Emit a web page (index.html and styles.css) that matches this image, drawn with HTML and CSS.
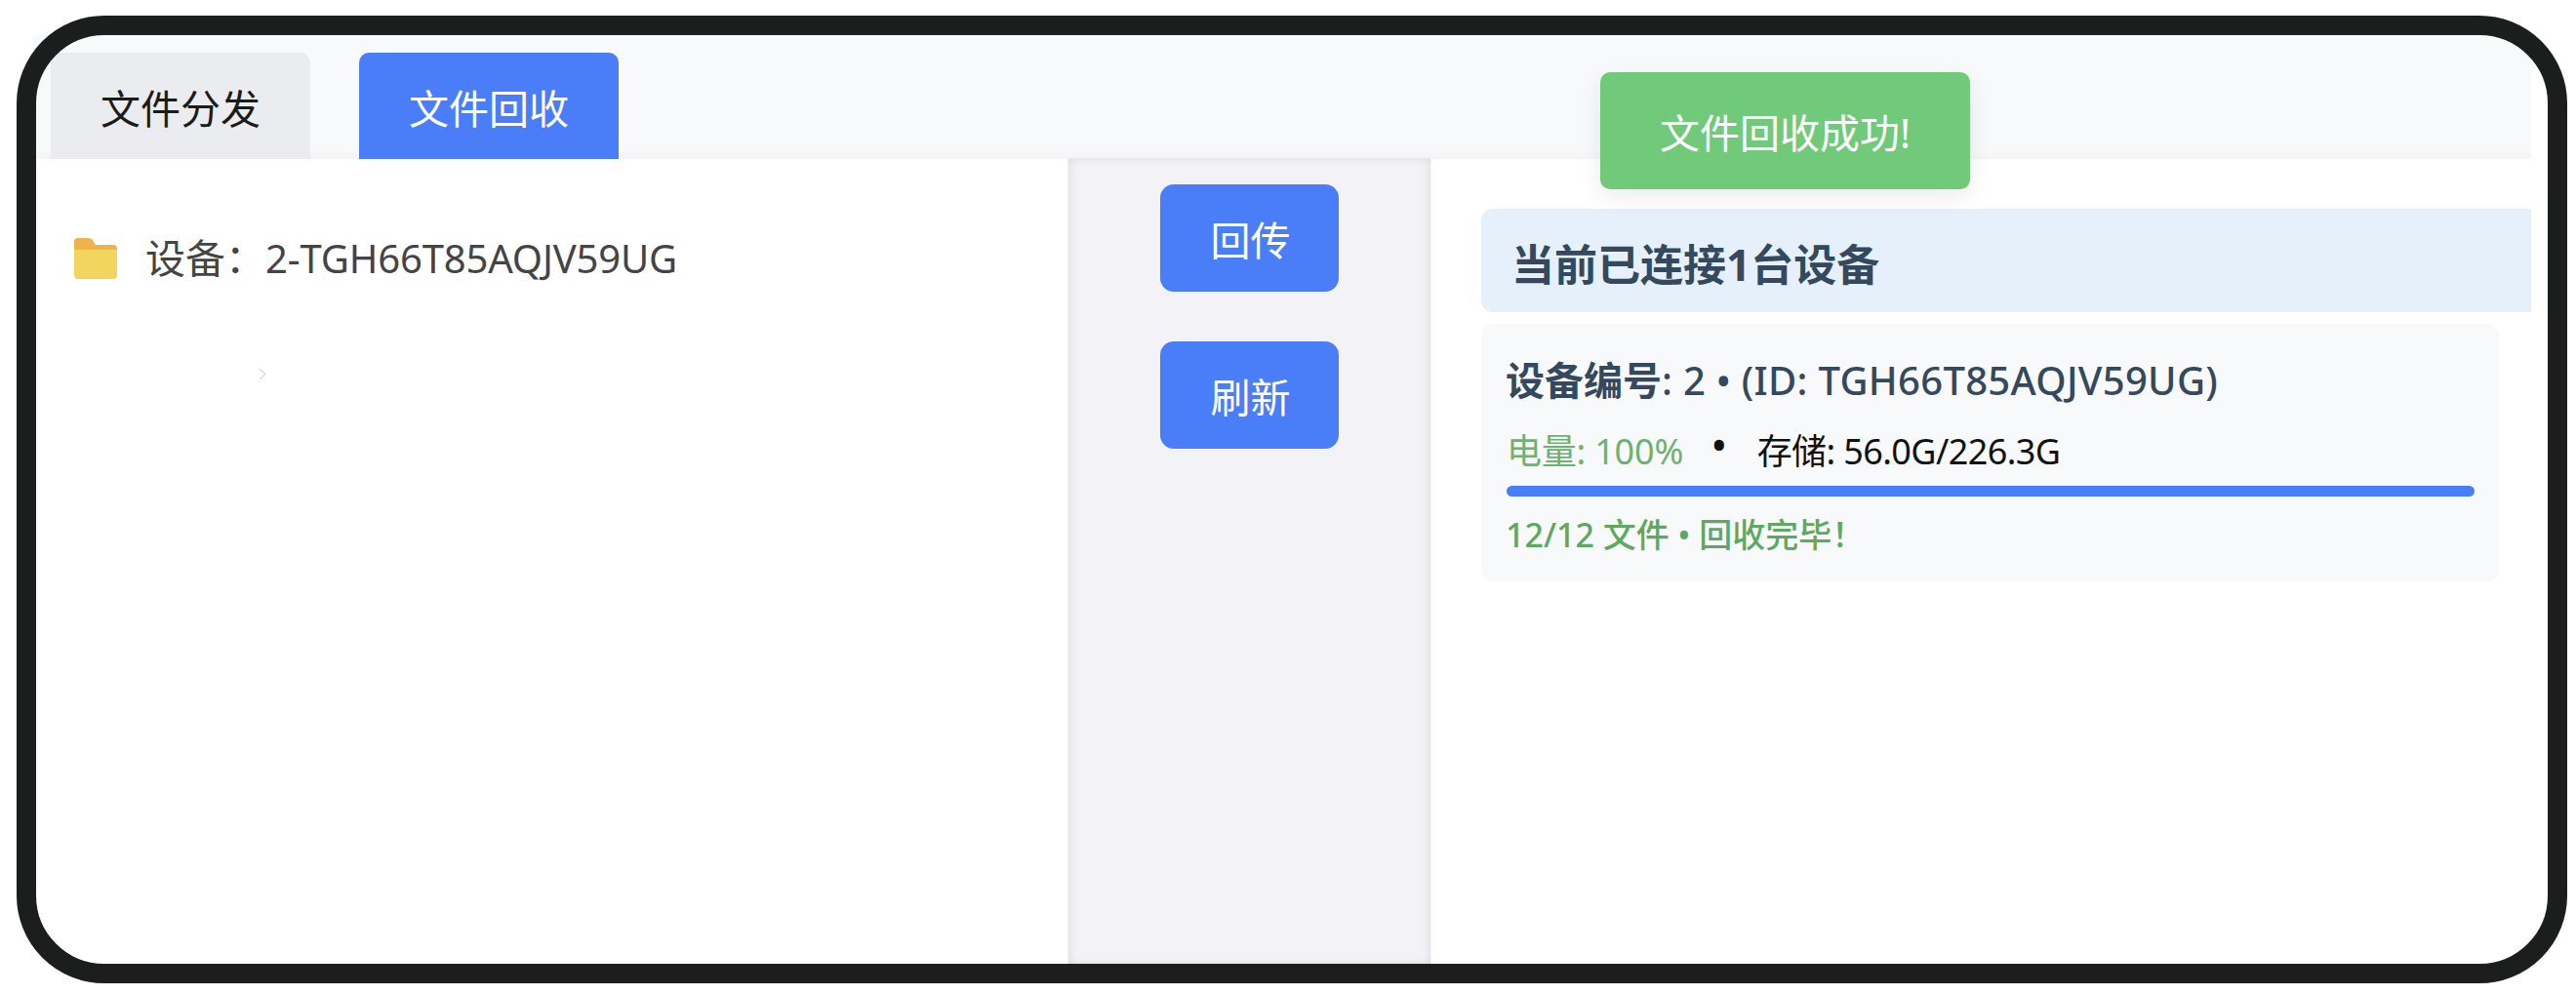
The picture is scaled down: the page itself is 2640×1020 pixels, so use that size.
FILE: index.html
```html
<!DOCTYPE html>
<html lang="zh-CN">
<head>
<meta charset="utf-8">
<title>文件回收</title>
<link rel="stylesheet" href="styles.css">
</head>
<body>
<div class="stage">
  <div class="app">
    <header class="tabs">
      <div class="tab">文件分发</div>
      <div class="tab tab-active">文件回收</div>
    </header>
    <main class="main">
      <section class="tree">
        <div class="tree-row">
          <svg class="folder" viewBox="0 0 44 42" width="44" height="42" aria-hidden="true">
            <path d="M0 4a4 4 0 0 1 4-4h10c3 0 5 1 6 4l2 3h18a4 4 0 0 1 4 4v5H0z" fill="#f0b24a"/>
            <path d="M0 12h44v26a4 4 0 0 1-4 4H4a4 4 0 0 1-4-4z" fill="#f3d45f"/>
          </svg>
          <span class="tree-label"><span class="tree-key">设备：</span>2-TGH66T85AQJV59UG</span>
        </div>
        <svg class="chevron" viewBox="0 0 7 11" width="7" height="11" aria-hidden="true">
          <path d="M0.5 0.5 6 5.5 0.5 10.5" fill="none" stroke="#bdbdbd" stroke-width="1"/>
        </svg>
      </section>
      <section class="actions">
        <button class="action">回传</button>
        <button class="action">刷新</button>
      </section>
      <section class="devices">
        <h2 class="banner">当前已连接1台设备</h2>
        <article class="card">
          <div class="card-title"><span class="card-key">设备编号</span>: 2 • (ID: TGH66T85AQJV59UG)</div>
          <div class="card-meta">
            <span class="battery">电量: 100%</span>
            <span class="dot">•</span>
            <span class="storage">存储: 56.0G/226.3G</span>
          </div>
          <div class="progress"><div class="progress-fill"></div></div>
          <div class="card-status">12/12 文件 • 回收完毕！</div>
        </article>
      </section>
    </main>
  </div>
  <div class="toast">文件回收成功!</div>
  <div class="frame"></div>
</div>
</body>
</html>
```

FILE: styles.css
```css
* { box-sizing: border-box; }
html, body { margin: 0; padding: 0; background: #fff; }
body {
  font-family: "Noto Sans", "Noto Sans CJK SC", sans-serif;
  overflow: hidden;
}
.stage {
  position: relative;
  width: 2640px;
  height: 1020px;
  padding: 36px 46px 32px 34px;
}
.app {
  height: 952px;
  display: flex;
  flex-direction: column;
  background: #fff;
}
.tabs {
  height: 127px;
  flex: none;
  display: flex;
  align-items: flex-end;
  gap: 50px;
  padding-left: 18px;
  background: linear-gradient(#f8f9fb 0, #f8f9fb 118px, #f4f4f6 127px);
}
.tab {
  width: 266px;
  height: 109px;
  display: flex;
  align-items: center;
  justify-content: center;
  font-size: 41px;
  color: #1b1b1b;
  background: #ebecef;
  border-radius: 10px 10px 0 0;
}
.tab-active { background: #4a7ef8; color: #fff; }
.main { flex: 1; display: flex; min-height: 0; }
.tree {
  width: 1061px;
  flex: none;
  padding: 80px 0 0 42px;
  display: flex;
  flex-direction: column;
  background: #fff;
}
.tree-row {
  display: flex;
  align-items: center;
  gap: 29px;
  height: 44px;
  font-size: 40px;
  color: #444;
  letter-spacing: -0.15px;
}
.tree-label { margin-top: -6px; }
.tree-key { font-size: 41px; letter-spacing: 0; }
.folder { flex: none; }
.chevron { margin: 91px 0 0 190px; }
.actions {
  width: 371px;
  flex: none;
  display: flex;
  flex-direction: column;
  align-items: center;
  gap: 51px;
  padding-top: 26px;
  background: #f3f2f7;
  box-shadow: inset 4px 0 12px -4px rgba(0,0,0,.1), inset -4px 0 12px -4px rgba(0,0,0,.1), 0 0 2px rgba(0,0,0,.12);
}
.action {
  width: 183px;
  height: 110px;
  border: 0;
  border-radius: 14px;
  background: #4a7ef8;
  color: #fff;
  font: inherit;
  font-size: 41px;
  padding: 0 0 0 2px;
}
.devices {
  flex: 1;
  min-width: 0;
  padding: 51px 0 0 52px;
}
.banner {
  margin: 0;
  height: 106px;
  display: flex;
  align-items: center;
  padding: 4px 0 0 31px;
  font-size: 44px;
  font-weight: 700;
  color: #34495e;
  background: #e6f0fb;
  border-radius: 12px 0 0 12px;
}
.card {
  width: 1043px;
  height: 264px;
  margin-top: 12px;
  padding: 30px 26px 0 26px;
  background: #f8f9fb;
  border-radius: 12px;
}
.card-title {
  margin-left: -1px;
  font-size: 40px;
  font-weight: 500;
  letter-spacing: 0.3px;
  line-height: 56px;
  color: #34495e;
}
.card-key { font-weight: 700; letter-spacing: 0; }
.card-meta {
  display: flex;
  gap: 30px;
  margin-top: 21px;
  font-size: 36px;
  line-height: 48px;
  color: #111;
}
.battery { color: #6fb073; letter-spacing: -0.2px; }
.dot { margin-top: -6px; font-weight: 700; }
.storage { margin-left: 2px; letter-spacing: -0.6px; }
.progress {
  height: 11px;
  width: 992px;
  margin-top: 11px;
  border-radius: 6px;
  background: #e3e6ee;
  overflow: hidden;
}
.progress-fill { width: 100%; height: 100%; background: #4a7ef8; }
.card-status {
  margin-top: 17px;
  margin-left: -1px;
  font-size: 34px;
  font-weight: 500;
  line-height: 44px;
  color: #5ea861;
}
.toast {
  position: absolute;
  left: 1640px;
  top: 74px;
  width: 379px;
  height: 120px;
  display: flex;
  align-items: center;
  justify-content: center;
  font-size: 41px;
  color: #fff;
  background: #71c97a;
  border-radius: 10px;
  box-shadow: 0 8px 24px rgba(0,0,0,.08);
}
.frame {
  position: absolute;
  left: 17px;
  top: 16px;
  width: 2614px;
  height: 992px;
  border: 20px solid #1c1e1d;
  border-radius: 90px;
  pointer-events: none;
}
```
